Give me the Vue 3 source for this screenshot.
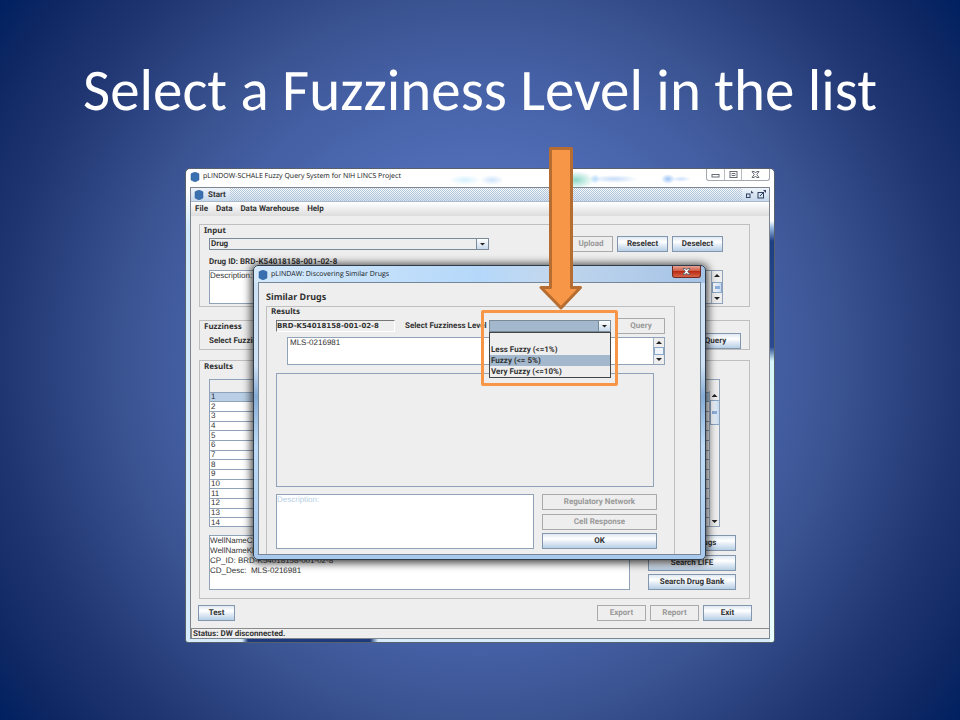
<script setup>
import { ref } from 'vue'

const menus = ['File', 'Data', 'Data Warehouse', 'Help']
const rows = Array.from({ length: 14 }, (_, i) => i + 1)
const levels = ['', 'Less Fuzzy (<=1%)', 'Fuzzy (<= 5%)', 'Very Fuzzy (<=10%)']
const hovered = 2
const level = ref('')
const source = ref('Drug')
const drug = ref('BRD-K54018158-001-02-8')
const similar = ref('MLS-0216981')
const hint = 'Description:'
const details = 'WellNameCP:\nWellNameKD:\nCP_ID: BRD-K54018158-001-02-8\nCD_Desc:  MLS-0216981'
</script>

<template>
  <main class="slide">
    <h1>Select a Fuzziness Level in the list</h1>

    <div class="stage">
      <section class="window">
        <header class="caption">
          <svg class="logo" viewBox="0 0 10 10"><path d="M5 0 9 1.8V8L5 10 1 8V1.800Z" /></svg>
          <span class="caption-text">pLINDOW-SCHALE Fuzzy Query System for NIH LINCS Project</span>
          <span class="chrome">
            <button type="button" aria-label="Minimize"><svg viewBox="0 0 9 7"><rect x="1" y="3.500" width="7" height="2.500" /></svg></button>
            <button type="button" aria-label="Restore"><svg viewBox="0 0 9 7"><rect x="1" y=".5" width="7" height="6" /><rect x="3.200" y="2.500" width="2.600" height="2" /></svg></button>
            <button type="button" class="wide" aria-label="Close"><svg viewBox="0 0 9 7"><path d="M1 .5H3.300L4.500 2 5.700.5H8L5.800 3.500 8 6.500H5.700L4.500 5 3.300 6.500H1L3.200 3.500Z" /></svg></button>
          </span>
        </header>

        <div class="frame">
          <div class="start">
            <span class="start-name">
              <svg class="logo" viewBox="0 0 10 10"><path d="M5 0 9 1.8V8L5 10 1 8V1.800Z" /></svg>
              Start
            </span>
            <span class="start-tools">
              <button type="button" aria-label="Shrink"><svg viewBox="0 0 9 9"><rect x="1.500" y="4" width="3.500" height="3.500" /><path class="tip" d="M6 .5V3.200H8.800Z" /></svg></button>
              <button type="button" aria-label="Enlarge"><svg viewBox="0 0 9 9"><rect x="1" y="2.500" width="5.500" height="5.500" /><path d="M3 6 7 2" /><path class="tip" d="M6 0H9V3Z" /></svg></button>
            </span>
          </div>
          <nav class="menu">
            <button v-for="m in menus" :key="m" type="button">{{ m }}</button>
          </nav>

          <div class="content">
            <section class="panel input-panel">
              <h2>Input</h2>
              <div class="row">
                <span class="combo source">
                  <select v-model="source" aria-label="Input type"><option>Drug</option></select>
                  <i class="arrow-box"><b class="down"></b></i>
                </span>
                <span class="row-buttons">
                  <button type="button" class="btn upload" disabled>Upload</button>
                  <button type="button" class="btn w51">Reselect</button>
                  <button type="button" class="btn w51">Deselect</button>
                </span>
              </div>
              <label class="drug-id" for="desc">Drug ID: BRD-K54018158-001-02-8</label>
              <div class="scroll-area desc">
                <textarea id="desc" :value="hint" readonly></textarea>
                <span class="bar"><b class="up"></b><i class="thumb grip"></i><b class="down"></b></span>
              </div>
            </section>

            <section class="panel fuzz-panel">
              <h2>Fuzziness</h2>
              <div class="fuzz-row">
                <span>Select Fuzziness Level</span>
                <button type="button" class="btn w51">Query</button>
              </div>
            </section>

            <section class="panel results-panel">
              <h2>Results</h2>
              <div class="grid">
                <table>
                  <thead><tr><th></th></tr></thead>
                  <tbody>
                    <tr v-for="r in rows" :key="r" :class="{ picked: r === 1 }"><td>{{ r }}</td></tr>
                  </tbody>
                </table>
                <span class="grid-side">
                  <span class="bar"><b class="up"></b><i class="thumb grip"></i><b class="down"></b></span>
                </span>
              </div>
              <div class="lower">
                <textarea class="details" aria-label="Details" :value="details" readonly></textarea>
                <div class="searches">
                  <button type="button" class="btn">Similar Drugs</button>
                  <button type="button" class="btn">Search LIFE</button>
                  <button type="button" class="btn">Search Drug Bank</button>
                </div>
              </div>
            </section>

            <div class="actions">
              <button type="button" class="btn test">Test</button>
              <span class="row-buttons">
                <button type="button" class="btn w49" disabled>Export</button>
                <button type="button" class="btn w49" disabled>Report</button>
                <button type="button" class="btn w49">Exit</button>
              </span>
            </div>
          </div>
          <footer class="status">Status: DW disconnected.</footer>
        </div>
      </section>

      <section class="dialog" role="dialog" aria-labelledby="dialog-title">
        <header class="dialog-caption">
          <svg class="logo" viewBox="0 0 10 10"><path d="M5 0 9 1.8V8L5 10 1 8V1.800Z" /></svg>
          <span id="dialog-title" class="caption-text">pLINDAW: Discovering Similar Drugs</span>
          <button type="button" class="close" aria-label="Close"><svg viewBox="0 0 9 7"><path d="M1 .5H3.300L4.500 2 5.700.5H8L5.800 3.500 8 6.500H5.700L4.500 5 3.300 6.500H1L3.200 3.500Z" /></svg></button>
        </header>
        <div class="dialog-body">
          <h2 class="dialog-head">Similar Drugs</h2>
          <section class="dialog-panel">
            <h2>Results</h2>
            <div class="query-row">
              <input v-model="drug" class="drug-field" aria-label="Drug ID" />
              <label class="level-label" for="level">Select Fuzziness Level</label>
              <div class="picker">
                <span class="combo level">
                  <select id="level" v-model="level">
                    <option v-for="l in levels" :key="l" :value="l">{{ l }}</option>
                  </select>
                  <i class="arrow-box"><b class="down"></b></i>
                </span>
                <ul class="options">
                  <li v-for="(l, i) in levels" :key="l" :class="{ hover: i === hovered }">{{ l }}</li>
                </ul>
                <div class="highlight"></div>
                <svg class="pointer" viewBox="0 0 44 164"><path d="M11.500 1.500H32.500V140.500H41.500L22 161 2 140.500H11.500Z" /></svg>
              </div>
              <button type="button" class="btn w48" disabled>Query</button>
            </div>
            <div class="scroll-area similar">
              <textarea v-model="similar" aria-label="Similar drugs"></textarea>
              <span class="bar"><b class="up"></b><i class="thumb"></i><b class="down"></b></span>
            </div>
            <div class="blank"></div>
            <div class="dialog-lower">
              <textarea class="hint" aria-label="Description" :value="hint" readonly></textarea>
              <div class="dialog-buttons">
                <button type="button" class="btn" disabled>Regulatory Network</button>
                <button type="button" class="btn" disabled>Cell Response</button>
                <button type="button" class="btn">OK</button>
              </div>
            </div>
          </section>
        </div>
      </section>
    </div>
  </main>
</template>

<style>
body {
  margin: 0;
  background: #002060;
}
</style>

<style scoped>
* {
  box-sizing: border-box;
}
.slide {
  min-height: 100vh;
  padding: 50px 185px 76px;
  background: radial-gradient(circle farthest-corner at 50% 50%, #5b7cc8 0%, #4f6cb5 33%, #445fa3 49%, #3a5391 60%, #1f3572 80%, #0f2864 92%, #002060 100%);
  font: bold 8px/10px Roboto, "Liberation Sans", sans-serif;
  text-rendering: geometricPrecision;
  color: #333;
}
h1 {
  margin: 0 -160px 38px;
  font: 400 59px/80px Carlito, Lato, sans-serif;
  text-align: center;
  color: #fff;
}
button,
select,
input,
textarea {
  margin: 0;
  padding: 0;
  border: 0;
  border-radius: 0;
  background: none;
  font: inherit;
  color: inherit;
  text-rendering: inherit;
  appearance: none;
  outline: none;
}
textarea {
  display: block;
  resize: none;
  overflow: hidden;
  font: 400 8px/10px "Liberation Sans", Arial, sans-serif;
}
svg {
  display: block;
}
.stage {
  position: relative;
}
.logo {
  width: 10px;
  height: 10px;
  fill: #3a70b0;
  stroke: #2a5c9c;
  stroke-width: 0.5;
}

/* Main window */
.window {
  padding: 0 4px 3px;
  border: 1px solid #59616c;
  border-radius: 5px 5px 3px 3px;
  background:
    linear-gradient(90deg, transparent 56px, #1d3a7c 62px, #1d3a7c 184px, transparent 192px) left bottom / 100% 3px no-repeat,
    linear-gradient(#fff 52px, #9fc0e8 58px, #1f3f84 72px, #2a4b92 178px, #d5f6fa 192px, #e8ffff 100%) right top / 4px 100% no-repeat,
    linear-gradient(#fff 20px, #cfe8fb 60px, #d6ecfb 100%);
}
.caption {
  display: flex;
  align-items: flex-start;
  gap: 3px;
  height: 18px;
  background:
    radial-gradient(ellipse 16px 5px at 275px 11px, #d6f1fc, transparent),
    radial-gradient(ellipse 12px 5px at 302px 11px, #cfe4fb, transparent),
    radial-gradient(ellipse 18px 9px at 386px 11px, #8ed8c8, transparent),
    radial-gradient(ellipse 5px 5px at 405px 10px, #b5dbfb, transparent),
    radial-gradient(ellipse 24px 4px at 424px 10px, #c5dcf8, transparent),
    radial-gradient(ellipse 7px 5px at 478px 10px, #9dc4f5, transparent),
    radial-gradient(ellipse 10px 3px at 491px 10px, #cfe1fa, transparent);
}
.caption > .logo {
  margin-top: 3px;
}
.caption-text {
  flex: 1;
  font: 400 7px/16px "Open Sans", sans-serif;
  color: #111;
  white-space: nowrap;
}
.chrome {
  display: flex;
  border: 1px solid #a3a7ae;
  border-top: 0;
  border-radius: 0 0 3px 3px;
}
.chrome button {
  display: flex;
  align-items: center;
  justify-content: center;
  width: 17px;
  height: 11px;
  border-left: 1px solid #b8bbc0;
}
.chrome button:first-child {
  border-left: 0;
}
.chrome .wide {
  width: 28px;
}
.chrome svg,
.close svg {
  width: 9px;
  height: 7px;
  fill: #fff;
  stroke: #666b76;
}
.frame {
  border: 1px solid #7e858e;
  background: #eee;
}
.start {
  display: flex;
  justify-content: space-between;
  height: 14px;
  border-bottom: 1px solid #a9b9cc;
  background:
    conic-gradient(#b4c6da 25%, transparent 0 50%, #b4c6da 0 75%, transparent 0) 0 0 / 2px 2px,
    linear-gradient(#fff, #d3e0ee);
}
.start-name,
.start-tools {
  display: flex;
  align-items: center;
  gap: 4px;
  padding: 0 4px 0 3px;
  background: linear-gradient(#eef4fa, #c6d8eb);
}
.start-tools {
  gap: 3px;
  padding: 0 3px;
}
.start-tools svg {
  width: 9px;
  height: 9px;
  fill: none;
  stroke: #2f3f5f;
}
.start-tools .tip {
  fill: #2f3f5f;
  stroke: none;
}
.menu {
  display: flex;
  gap: 8px;
  height: 14px;
  padding: 0 4px;
  background: linear-gradient(#fff, #ddd);
  line-height: 12px;
}
.content {
  padding: 8px 19px 7px 8px;
}
.panel {
  border: 1px solid #bfbfbf;
}
h2 {
  margin: 0;
  font: bold 8px/12px "Noto Sans", sans-serif;
}
.panel h2 {
  padding-left: 4px;
}
.row {
  display: flex;
  justify-content: space-between;
  align-items: center;
}
.input-panel {
  height: 83px;
  padding-right: 26px;
}
.input-panel .row,
.drug-id,
.desc {
  margin-left: 9px;
}
.input-panel h2 {
  line-height: 11px;
}
.row-buttons {
  display: flex;
  gap: 4px;
}
.btn {
  height: 16px;
  padding: 0 4px;
  border: 1px solid #8296ad;
  background: linear-gradient(#dfe9f4, #fff 35%, #e6eef7 55%, #b8cfe5);
  line-height: 14px;
  white-space: nowrap;
}
.btn:disabled {
  border-color: #aaa;
  background: #eee;
  color: #999;
}
.upload {
  width: 44px;
}
.w51 {
  width: 51px;
}
.w49 {
  width: 49px;
}
.w48 {
  width: 48px;
}
.combo {
  display: flex;
  height: 12px;
  border: 1px solid #7a8a99;
}
.combo select {
  flex: 1;
  min-width: 0;
  padding-left: 1px;
  line-height: 10px;
}
.source {
  width: 280px;
}
.arrow-box {
  display: flex;
  align-items: center;
  justify-content: center;
  width: 12px;
  border-left: 1px solid #7a8a99;
  background: linear-gradient(#fff, #c8daec);
}
.up,
.down {
  width: 6px;
  height: 3px;
  background: #222;
  clip-path: polygon(0 0, 100% 0, 50% 100%);
}
.up {
  clip-path: polygon(50% 0, 100% 100%, 0 100%);
}
.drug-id {
  display: block;
  padding: 5px 0 3px;
}
.scroll-area {
  display: flex;
  border: 1px solid #8fa2b8;
  background: #fff;
}
.scroll-area textarea {
  flex: 1;
  height: 100%;
}
.desc {
  height: 34px;
}
.bar {
  display: flex;
  flex-direction: column;
  align-items: center;
  justify-content: space-between;
  width: 11px;
  padding: 3px 0;
  border-left: 1px solid #9fb0c3;
  background: #eee;
}
.thumb {
  width: 10px;
  height: 8px;
  border: 1px solid #8ba6c6;
  background: #eef4fa;
}
.grip {
  height: 11px;
  background: linear-gradient(#8fb0dc, #8fb0dc) center / 5px 3px no-repeat, linear-gradient(90deg, #fff, #c5daf0);
}
.fuzz-panel {
  height: 30px;
  margin-top: 13px;
  padding-right: 8px;
}
.fuzz-row {
  display: flex;
  justify-content: space-between;
  align-items: center;
  padding-left: 9px;
}
.results-panel {
  margin-top: 10px;
  padding: 0 13px 8px 0;
}
.results-panel h2 {
  margin-bottom: 6px;
}
.grid {
  display: flex;
  height: 148px;
  margin: 0 16px 8px 9px;
  border: 1px solid #8fa2b8;
  overflow: hidden;
}
table {
  flex: 1;
  height: 148px;
  border-collapse: collapse;
  background: #fff;
  font: 400 8px/10px "Liberation Sans", Arial, sans-serif;
}
th {
  height: 12px;
  padding: 0;
  border-bottom: 1px solid #8fa2b8;
  background: #eee;
}
td {
  height: 9px;
  padding: 0 0 0 1px;
  border-bottom: 1px solid #8fa2b8;
  line-height: 8px;
}
.picked {
  background: #b8cfe5;
}
.grid-side {
  display: flex;
  padding-top: 11px;
}
.grid-side .bar {
  justify-content: flex-start;
  width: 10px;
}
.grid-side .thumb {
  height: 25px;
  margin: 3px 0 auto;
}
.lower {
  display: flex;
  gap: 18px;
  padding-left: 9px;
}
.details {
  flex: 1;
  height: 55px;
  border: 1px solid #8fa2b8;
  background: #fff;
}
.searches,
.dialog-buttons {
  display: flex;
  flex-direction: column;
  justify-content: space-between;
  width: 88px;
}
.actions {
  display: flex;
  justify-content: space-between;
  margin: 6px -2px 0 -1px;
}
.test {
  width: 37px;
}
.status {
  height: 10px;
  padding-left: 1px;
  border: 1px solid #8b8b8b;
  border-width: 1px 0 0 1px;
  line-height: 9px;
}

/* Dialog window */
.dialog {
  position: absolute;
  top: 97px;
  left: 68px;
  right: 69px;
  padding: 0 4px 4px;
  border: 1px solid #2f3c4c;
  border-radius: 5px;
  background:
    linear-gradient(90deg, #d5e9fb, #b5d8fa 50%, #c2d7ee 65%, #a5c3e6) left top / 100% 17px no-repeat,
    linear-gradient(#cfe1f4 100px, #86acd6 130px, #bedcf7 180px, #a9c9ec);
  box-shadow: 0 1px 8px 2px rgba(0, 0, 0, 0.75);
}
.dialog-caption {
  display: flex;
  align-items: flex-start;
  gap: 3px;
  height: 16px;
}
.dialog-caption .logo {
  margin-top: 4px;
}
.dialog-caption .caption-text {
  line-height: 17px;
}
.close {
  display: flex;
  align-items: center;
  justify-content: center;
  width: 29px;
  height: 12px;
  border: 1px solid #6f2a22;
  border-top: 0;
  border-radius: 0 0 3px 3px;
  background: linear-gradient(#e6a396, #cf5a45 45%, #b92c14 50%, #d8654a);
}
.dialog-body {
  padding: 8px 25px 0 7px;
  border: 1px solid #77879a;
  background: #eee;
}
.dialog-head {
  font-size: 9px;
}
.dialog-panel {
  margin-top: 3px;
  padding: 0 9px 5px;
  border: 1px solid #bfbfbf;
  border-bottom: 0;
}
.dialog-panel h2 {
  margin: -1px 0 0 -5px;
}
.query-row {
  display: flex;
  align-items: center;
  height: 16px;
}
.query-row .btn {
  flex: none;
}
.drug-field {
  flex: none;
  width: 119px;
  height: 12px;
  border: 1px solid;
  border-color: #777 #fff #fff #777;
  font: bold 7px/10px "DejaVu Sans", sans-serif;
}
.level-label {
  flex: 1;
  min-width: 0;
  padding-left: 10px;
  white-space: nowrap;
}
.picker {
  position: relative;
  flex: none;
  width: 122px;
  margin-right: 6px;
}
.level select {
  background: #a3b8cc;
}
.options {
  position: absolute;
  z-index: 1;
  top: 12px;
  left: 0;
  right: 0;
  margin: 0;
  padding: 0;
  border: 1px solid #444;
  background: #eee;
  list-style: none;
}
.options li {
  height: 11px;
  padding-left: 1px;
  line-height: 11px;
}
.options .hover {
  background: #a3b8cc;
}
.highlight {
  position: absolute;
  z-index: 2;
  top: -10px;
  left: -8px;
  right: -7px;
  height: 76px;
  border: 3px solid #f79646;
  border-radius: 2px;
}
.pointer {
  position: absolute;
  z-index: 3;
  top: -173px;
  left: 50px;
  width: 44px;
  height: 164px;
  fill: #f79646;
  stroke: #b66d31;
  stroke-width: 3;
  stroke-linejoin: round;
}
.similar {
  height: 28px;
  margin: 3px 0 8px 11px;
}
.similar textarea {
  padding-left: 2px;
}
.blank {
  height: 114px;
  margin: 0 11px 7px 0;
  border: 1px solid #8fa2b8;
}
.dialog-lower {
  display: flex;
  gap: 8px;
  margin-right: 8px;
}
.hint {
  flex: 1;
  height: 55px;
  border: 1px solid #8fa2b8;
  background: #fff;
  color: #b8cfe5;
}
.dialog-buttons {
  width: 115px;
}
</style>
